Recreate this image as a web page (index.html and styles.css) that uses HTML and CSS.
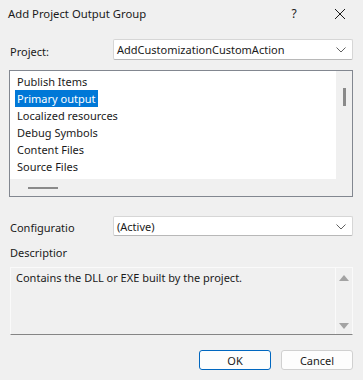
FILE: index.html
```html
<!DOCTYPE html>
<html lang="en">
<head>
    <meta charset="UTF-8">
    <title>Add Project Output Group</title>
    <link rel="stylesheet" href="styles.css">
</head>
<body>

<div class="dialog">
    <div class="titlebar">
        <div class="title">Add Project Output Group</div>
        <div class="title-btn help">?</div>
        <div class="title-btn close">
            <svg width="12" height="12" viewBox="0 0 12 12"><path d="M1 1 L11 11 M11 1 L1 11" stroke="#1a1a1a" stroke-width="1"/></svg>
        </div>
    </div>

    <div class="content">
        <div class="field-row project-row">
            <div class="label">Project:</div>
            <div class="combo">
                <span>AddCustomizationCustomAction</span>
                <svg class="chevron" width="10" height="6" viewBox="0 0 10 6"><path d="M0.5 0.5 L5 5 L9.5 0.5" fill="none" stroke="#606060" stroke-width="1"/></svg>
            </div>
        </div>

        <div class="listbox">
            <div class="list-items">
                <div class="item">Publish Items</div>
                <div class="item selected">Primary output</div>
                <div class="item">Localized resources</div>
                <div class="item">Debug Symbols</div>
                <div class="item">Content Files</div>
                <div class="item">Source Files</div>
            </div>
            <div class="vscroll"><div class="vthumb"></div></div>
            <div class="hscroll"><div class="hthumb"></div></div>
        </div>

        <div class="field-row config-row">
            <div class="label">Configuratio</div>
            <div class="combo">
                <span>(Active)</span>
                <svg class="chevron" width="10" height="6" viewBox="0 0 10 6"><path d="M0.5 0.5 L5 5 L9.5 0.5" fill="none" stroke="#606060" stroke-width="1"/></svg>
            </div>
        </div>

        <div class="desc-label">Descriptior</div>
        <div class="descbox">
            <div class="desc-text">Contains the DLL or EXE built by the project.</div>
            <div class="desc-scroll">
                <svg width="10" height="6" viewBox="0 0 10 6"><path d="M0 6 L5 0 L10 6 Z" fill="#a3a3a3"/></svg>
                <svg width="10" height="6" viewBox="0 0 10 6"><path d="M0 0 L10 0 L5 6 Z" fill="#a3a3a3"/></svg>
            </div>
        </div>

        <div class="buttons">
            <button class="btn primary">OK</button>
            <button class="btn">Cancel</button>
        </div>
    </div>
</div>

</body>
</html>
```

FILE: styles.css
```css
body {
    margin: 0;
    background-color: #f0f0f0;
    font-family: "Noto Sans", sans-serif;
    font-size: 11px;
    color: #1a1a1a;
}
.dialog {
    width: 363px;
    height: 380px;
    display: flex;
    flex-direction: column;
}
.titlebar {
    height: 27px;
    display: flex;
    align-items: center;
    padding-left: 8px;
}
.title {
    flex-grow: 1;
    font-size: 11.3px;
    color: #1a1a1a;
}
.title-btn {
    width: 46px;
    height: 27px;
    display: flex;
    justify-content: center;
    align-items: center;
    font-size: 12px;
}
.content {
    padding: 0 10px 0 9px;
    display: flex;
    flex-direction: column;
}
.field-row {
    display: flex;
    align-items: center;
}
.project-row {
    margin-top: 12px;
    height: 21px;
}
.label {
    width: 103px;
    padding-left: 1px;
    padding-top: 3px;
}
.combo {
    flex-grow: 1;
    height: 100%;
    box-sizing: border-box;
    background-color: #fff;
    border: 1px solid #d6d6d6;
    border-bottom-color: #b8b8b8;
    border-radius: 2px;
    display: flex;
    align-items: center;
    padding: 0 6px 0 3px;
}
.combo span {
    flex-grow: 1;
}
.chevron {
    margin-top: 1px;
}
.listbox {
    margin-top: 10px;
    height: 127px;
    box-sizing: border-box;
    border: 1px solid #828790;
    display: grid;
    grid-template-columns: 1fr 16px;
    grid-template-rows: 1fr 17px;
}
.list-items {
    background-color: #fff;
    padding: 2px 0 0 5px;
}
.item {
    height: 17px;
    line-height: 17px;
    padding-left: 2px;
    display: table;
    padding-right: 3px;
}
.item.selected {
    background-color: #0078d7;
    color: #fff;
}
.vscroll {
    grid-row: span 2;
    background-color: #f0f0f0;
    display: flex;
    justify-content: center;
    padding-top: 17px;
}
.vthumb {
    width: 3px;
    height: 18px;
    background-color: #8a8a8a;
}
.hscroll {
    background-color: #f0f0f0;
    display: flex;
    align-items: center;
    padding-left: 18px;
}
.hthumb {
    width: 30px;
    height: 2px;
    background-color: #8a8a8a;
}
.config-row {
    margin-top: 19px;
    height: 20px;
}
.desc-label {
    margin-top: 9px;
    padding-left: 1px;
    height: 22px;
}
.descbox {
    height: 68px;
    box-sizing: border-box;
    margin-left: 1px;
    border: 1px solid #fafafa;
    border-bottom: 1px solid #858585;
    display: flex;
}
.desc-text {
    flex-grow: 1;
    padding: 2px 0 0 5px;
    border-right: 1px solid #fafafa;
}
.desc-scroll {
    width: 16px;
    display: flex;
    flex-direction: column;
    justify-content: space-between;
    align-items: center;
    padding: 7px 0 5px;
}
.buttons {
    margin-top: 15px;
    display: flex;
    justify-content: flex-end;
    gap: 10px;
}
.btn {
    width: 72px;
    height: 20px;
    font-family: inherit;
    font-size: 11px;
    color: #1a1a1a;
    background-color: #fdfdfd;
    border: 1px solid #d0d0d0;
    border-radius: 3px;
    padding: 0;
}
.btn.primary {
    border-color: #0067c0;
}
```
